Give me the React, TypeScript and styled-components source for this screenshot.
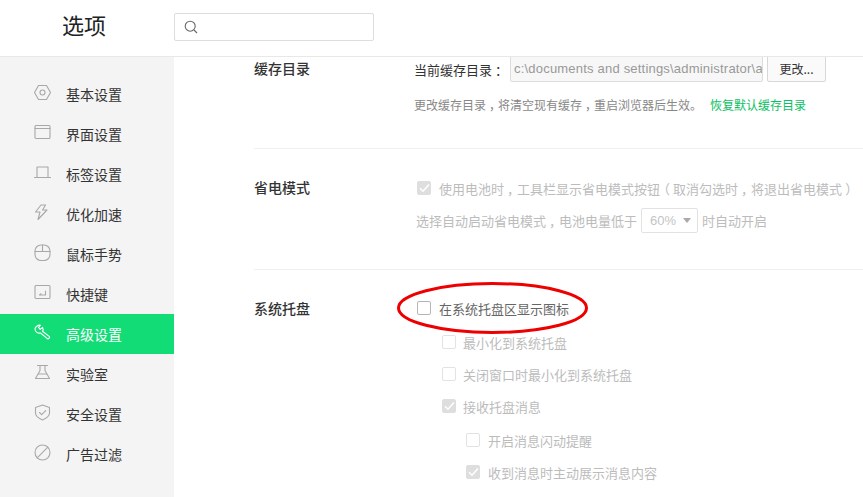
import React from "react";
import styled, { createGlobalStyle } from "styled-components";

const Global = createGlobalStyle`
  html, body { margin: 0; padding: 0; background: #fff; overflow: hidden; }
  body { font-family: "Noto Sans CJK SC", "Liberation Sans", sans-serif; color: #333; }
  * { box-sizing: border-box; }
`;

const Page = styled.div`
  position: relative;
  width: 863px;
  height: 497px;
  display: flex;
  flex-direction: column;
  overflow: hidden;
`;

const Header = styled.header`
  height: 57px;
  flex: none;
  display: flex;
  align-items: center;
  padding-left: 62px;
  border-bottom: 1px solid #e8e8e8;
  background: #fff;
  position: relative;
  z-index: 2;
`;

const Title = styled.h1`
  width: 112px;
  margin: -8px 0 0;
  font-size: 22px;
  line-height: 28px;
  font-weight: 400;
  color: #222;
`;

const Search = styled.div`
  width: 200px;
  height: 28px;
  margin-top: -2px;
  border: 1px solid #ddd;
  border-radius: 2px;
  display: flex;
  align-items: center;
  padding-left: 9px;
  color: #666;
`;

const Body = styled.div`
  flex: 1;
  display: flex;
  min-height: 0;
`;

const Sidebar = styled.nav`
  width: 174px;
  flex: none;
  background: #f4f4f4;
  padding-top: 17px;
`;

const NavItem = styled.div<{ $active?: boolean }>`
  height: 40px;
  display: flex;
  align-items: center;
  gap: 15px;
  padding-left: 34px;
  font-size: 14px;
  line-height: 20px;
  background: ${(p) => (p.$active ? "#11dc76" : "transparent")};
  color: ${(p) => (p.$active ? "#fff" : "#333")};
  svg { color: ${(p) => (p.$active ? "#fff" : "#a8a8a8")}; flex: none; margin-top: -4px; }
`;

const Main = styled.main`
  flex: 1;
  overflow: hidden;
  padding-left: 80px;
`;

const Scroller = styled.div`
  margin-top: -3px;
`;

const Section = styled.section<{ $height: number; $last?: boolean }>`
  height: ${(p) => p.$height}px;
  display: flex;
  border-bottom: ${(p) => (p.$last ? "none" : "1px solid #f0f0f0")};
`;

const SectionLabel = styled.div<{ $top: number }>`
  width: 160px;
  flex: none;
  padding-top: ${(p) => p.$top}px;
  font-size: 14px;
  line-height: 20px;
  font-weight: 500;
  color: #333;
`;

const Content = styled.div<{ $top: number }>`
  flex: 1;
  padding-top: ${(p) => p.$top}px;
  font-size: 13px;
`;

const Row = styled.div<{ $h?: number; $indent?: number; $muted?: boolean }>`
  height: ${(p) => p.$h ?? 32}px;
  padding-left: ${(p) => p.$indent ?? 0}px;
  display: flex;
  align-items: center;
  white-space: nowrap;
  color: ${(p) => (p.$muted ? "#bcbcbc" : "#666")};
`;

const DirLabel = styled.span`
  width: 96px;
  padding-top: 2px;
  color: #333;
`;

const PathInput = styled.div`
  width: 253px;
  height: 28px;
  border: 1px solid #ddd;
  border-radius: 2px;
  background: #f7f7f7;
  color: #999;
  font-family: "Liberation Sans", sans-serif;
  font-size: 13px;
  letter-spacing: 0.2px;
  line-height: 28px;
  padding-left: 3px;
  overflow: hidden;
  white-space: nowrap;
`;

const ChangeButton = styled.div`
  width: 59px;
  height: 28px;
  margin-left: 4px;
  border: 1px solid #d8d8d8;
  border-radius: 2px;
  background: #fafafa;
  color: #333;
  font-size: 12px;
  line-height: 27px;
  text-align: center;
`;

const Hint = styled.div`
  margin-top: 13px;
  font-size: 12px;
  line-height: 20px;
  color: #888;
  white-space: nowrap;
`;

const Link = styled.span`
  margin-left: 8px;
  color: #0cbf63;
`;

/* Full-width punctuation sits in the middle of its cell in the reference:
   the glyph moves right inside the cell and the advance stays one em. */
const Punct = styled.span`
  padding-left: 3px;
  letter-spacing: -3px;
`;

/* The opening bracket moves left: the character before it gives up 3px. */
const Tight = styled.span`
  letter-spacing: -3px;
`;

const OpenBracket = styled.span`
  padding-right: 3px;
`;

const Box = styled.span<{ $checked?: boolean; $muted?: boolean; $gap?: number }>`
  width: 14px;
  height: 14px;
  flex: none;
  margin-right: ${(p) => p.$gap ?? 8}px;
  border-radius: 2px;
  border: 1px solid ${(p) => (p.$checked ? "#dedede" : p.$muted ? "#e2e2e2" : "#b5b5b5")};
  background: ${(p) => (p.$checked ? "#dedede" : "#fff")};
  display: flex;
  align-items: center;
  justify-content: center;
`;

const PowerLine = styled.div`
  height: 25px;
  margin-top: 4px;
  padding-left: 2px;
  display: flex;
  align-items: center;
  white-space: nowrap;
  color: #bcbcbc;
`;

const Select = styled.span`
  width: 57px;
  height: 25px;
  margin: 0 4px;
  border: 1px solid #e2e2e2;
  border-radius: 2px;
  display: flex;
  align-items: center;
  justify-content: space-between;
  padding: 0 6px 0 8px;
  font-family: "Liberation Sans", sans-serif;
  font-size: 13px;
  color: #c4c4c4;
`;

const Caret = styled.i`
  width: 0;
  height: 0;
  border-left: 4px solid transparent;
  border-right: 4px solid transparent;
  border-top: 5px solid #aaa;
`;

const Ring = styled.svg`
  position: absolute;
  left: 395px;
  top: 280px;
  pointer-events: none;
`;

const Ic: React.FC<{ children: React.ReactNode }> = ({ children }) => (
  <svg width="17" height="17" viewBox="0 0 17 17" fill="none" stroke="currentColor" strokeWidth="1.1" strokeLinejoin="round" strokeLinecap="round">
    {children}
  </svg>
);

const Check = () => (
  <svg width="11" height="10" viewBox="0 0 11 10" fill="none" stroke="#fff" strokeWidth="1.5">
    <path d="M1 5.2 4 8.2 10 1.5" />
  </svg>
);

const navItems: { label: string; active?: boolean; icon: React.ReactNode }[] = [
  { label: "基本设置", icon: <><path d="M4.5 1.5h8L16.5 8.5l-4 7h-8L.5 8.5z" /><circle cx="8.5" cy="8.5" r="2.5" /></> },
  { label: "界面设置", icon: <><rect x="1" y="1.5" width="15" height="13" rx="1" /><path d="M1 4.5h15" /></> },
  { label: "标签设置", icon: <><path d="M3 13V3h11v10" /><path d="M.5 13.5h16" /></> },
  { label: "优化加速", icon: <path d="M7 1 1.5 8H6L4 15.5 13 6H8.5L11.5 1z" /> },
  { label: "鼠标手势", icon: <><rect x="1" y="1" width="15" height="15.5" rx="6" /><path d="M8.5 1v6.5M1 7.5h15" /></> },
  { label: "快捷键", icon: <><rect x="1" y="1.5" width="15" height="13" rx="1" /><path d="M11.5 7v4h-6M5.5 11l1.5-1.2" /></> },
  { label: "高级设置", active: true, icon: <path d="M6.5 1.2 4.5 3.4 6.2 5.4 8.6 3.4C9.4 5 9.2 6.4 8.5 7.2L15.5 12.6C16 13.2 14.6 15.4 13.6 14.8L6.6 9C4 9.6 1 8 1 5 1 3 3.8.8 6.5 1.2z" /> },
  { label: "实验室", icon: <><path d="M3.5 1.5h10M6 1.5v5L1.5 14.5h14L11 6.5v-5" /><path d="M4.5 10h8" /></> },
  { label: "安全设置", icon: <><path d="M8.5 1 15.5 3.5V9c0 3-3.5 5.5-7 7-3.5-1.5-7-4-7-7V3.5z" /><path d="m5.5 8.5 2.2 2.2 4-4" /></> },
  { label: "广告过滤", icon: <><circle cx="8.5" cy="8.5" r="7.5" /><path d="M3.2 13.8 13.8 3.2" /></> },
];

export default function App() {
  return (
    <Page>
      <Global />
      <Header>
        <Title>选项</Title>
        <Search>
          <svg width="14" height="14" viewBox="0 0 14 14" fill="none" stroke="currentColor" strokeWidth="1.1">
            <circle cx="6.2" cy="6.2" r="5" />
            <path d="m10 10 3 3" />
          </svg>
        </Search>
      </Header>
      <Body>
        <Sidebar>
          {navItems.map((n) => (
            <NavItem key={n.label} $active={n.active}>
              <Ic>{n.icon}</Ic>
              <span>{n.label}</span>
            </NavItem>
          ))}
        </Sidebar>
        <Main>
          <Scroller>
            <Section $height={95}>
              <SectionLabel $top={4}>缓存目录</SectionLabel>
              <Content $top={0}>
                <Row $h={28}>
                  <DirLabel>当前缓存目录<Punct>：</Punct></DirLabel>
                  <PathInput>c:\documents and settings\administrator\a</PathInput>
                  <ChangeButton>更改...</ChangeButton>
                </Row>
                <Hint>
                  更改缓存目录<Punct>，</Punct>将清空现有缓存<Punct>，</Punct>重启浏览器后生效。
                  <Link>恢复默认缓存目录</Link>
                </Hint>
              </Content>
            </Section>
            <Section $height={121}>
              <SectionLabel $top={28}>省电模式</SectionLabel>
              <Content $top={23}>
                <Row $h={32} $muted $indent={3}>
                  <Box $checked $muted><Check /></Box>
                  <span>
                    使用电池时<Punct>，</Punct>工具栏显示省电模式按<Tight>钮</Tight><OpenBracket>（</OpenBracket>取消勾选时<Punct>，</Punct>将退出省电模式<Punct>）</Punct>
                  </span>
                </Row>
                <PowerLine>
                  <span>选择自动启动省电模式<Punct>，</Punct>电池电量低于</span>
                  <Select>60%<Caret /></Select>
                  时自动开启
                </PowerLine>
              </Content>
            </Section>
            <Section $height={240} $last>
              <SectionLabel $top={28}>系统托盘</SectionLabel>
              <Content $top={22}>
                <Row $h={32} $indent={3}>
                  <Box />
                  在系统托盘区显示图标
                </Row>
                <Row $h={36} $muted $indent={28}>
                  <Box $muted $gap={7} />最小化到系统托盘
                </Row>
                <Row $h={28} $muted $indent={28}>
                  <Box $muted $gap={7} />关闭窗口时最小化到系统托盘
                </Row>
                <Row $h={36} $muted $indent={28}>
                  <Box $checked $muted $gap={7}><Check /></Box>接收托盘消息
                </Row>
                <Row $h={32} $muted $indent={52}>
                  <Box $muted />开启消息闪动提醒
                </Row>
                <Row $h={32} $muted $indent={52}>
                  <Box $checked $muted><Check /></Box>收到消息时主动展示消息内容
                </Row>
              </Content>
            </Section>
          </Scroller>
        </Main>
      </Body>
      <Ring width="196" height="56" viewBox="0 0 196 56" fill="none">
        <ellipse cx="97.5" cy="28" rx="94" ry="24.5" stroke="#ee0000" strokeWidth="3" />
      </Ring>
    </Page>
  );
}
